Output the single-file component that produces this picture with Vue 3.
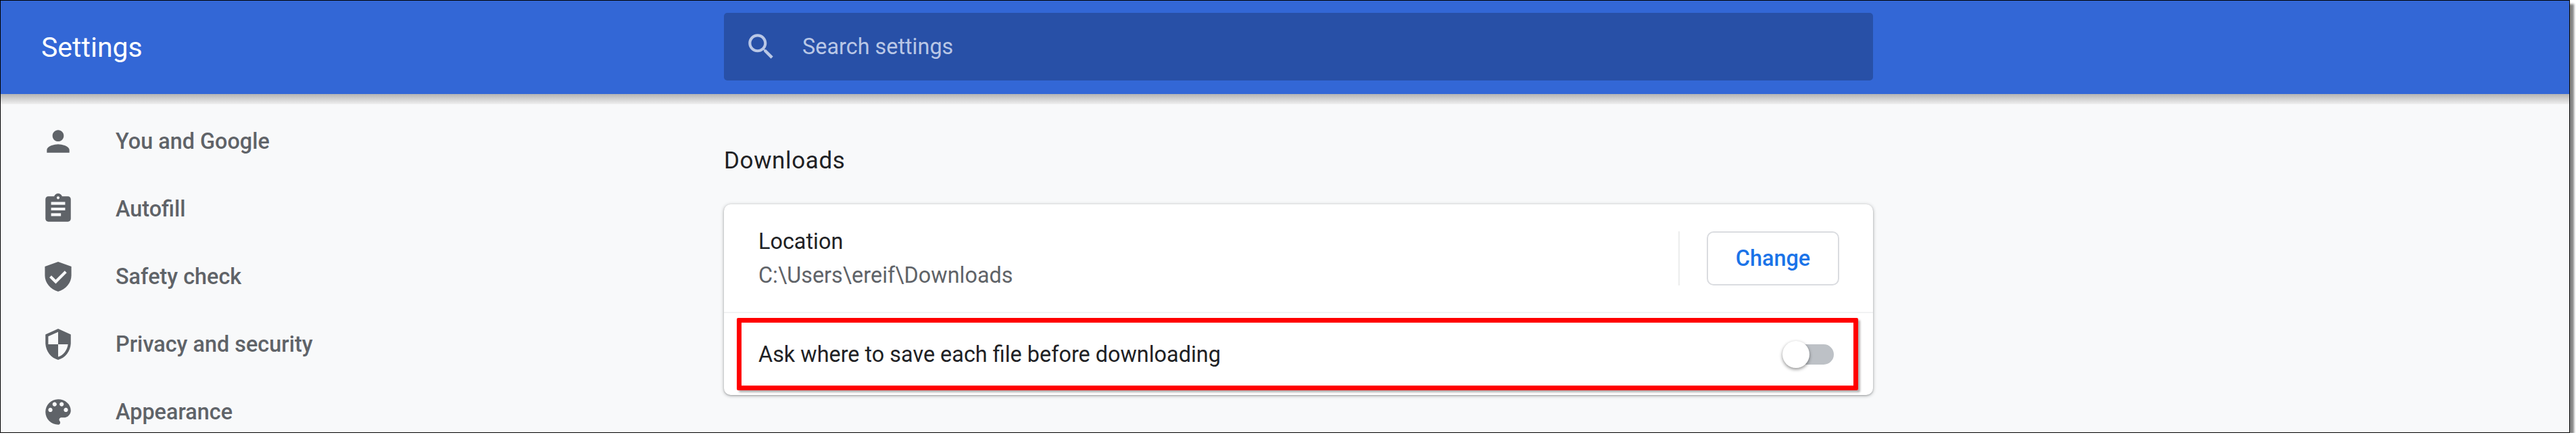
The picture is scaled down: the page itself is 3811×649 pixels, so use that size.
<script setup>
const navItems = [
  { label: 'You and Google', d: 'M12 12c2.21 0 4-1.79 4-4s-1.79-4-4-4-4 1.79-4 4 1.79 4 4 4zm0 2c-2.67 0-8 1.34-8 4v2h16v-2c0-2.66-5.33-4-8-4z' },
  { label: 'Autofill', d: 'M19 3h-4.18C14.4 1.84 13.3 1 12 1c-1.3 0-2.4.84-2.82 2H5c-1.1 0-2 .9-2 2v14c0 1.1.9 2 2 2h14c1.1 0 2-.9 2-2V5c0-1.1-.9-2-2-2zm-7 0c.55 0 1 .45 1 1s-.45 1-1 1-1-.45-1-1 .45-1 1-1zm2 14H7v-2h7v2zm3-4H7v-2h10v2zm0-4H7V7h10v2z' },
  { label: 'Safety check', d: 'M12 1.4l9.4 3.4v6.4c0 5.3-4 9.9-9.4 11.4-5.4-1.5-9.4-6.1-9.4-11.4V4.8zM10.3 17l7.8-7.8-1.4-1.4-6.4 6.4-3.1-3-1.4 1.4z' },
  { label: 'Privacy and security', d: 'M12 1L3 5v6c0 5.55 3.84 10.74 9 12 5.16-1.26 9-6.45 9-12V5l-9-4zm0 10.99h7c-.53 4.12-3.28 7.79-7 8.94V12H5V6.3l7-3.11v8.8z' },
  { label: 'Appearance', d: 'M12 3c-4.97 0-9 4.03-9 9s4.03 9 9 9c.83 0 1.5-.67 1.5-1.5 0-.39-.15-.74-.39-1.01-.23-.26-.38-.61-.38-.99 0-.83.67-1.5 1.5-1.5H16c2.76 0 5-2.24 5-5 0-4.42-4.03-8-9-8zm-5.5 9c-.83 0-1.5-.67-1.5-1.5S5.67 9 6.5 9 8 9.67 8 10.5 7.33 12 6.5 12zm3-4C8.67 8 8 7.33 8 6.5S8.67 5 9.5 5s1.5.67 1.5 1.5S10.33 8 9.5 8zm5 0c-.83 0-1.5-.67-1.5-1.5S13.67 5 14.5 5s1.5.67 1.5 1.5S15.33 8 14.5 8zm3 4c-.83 0-1.5-.67-1.5-1.5S16.67 9 17.5 9s1.5.67 1.5 1.5-.67 1.5-1.5 1.5z' }
]
</script>

<template>
  <div class="frame">
    <header class="topbar">
      <h1 class="title">Settings</h1>
      <div class="search">
        <svg class="search-icon" viewBox="0 0 24 24"><path d="M15.5 14h-.79l-.28-.27C15.41 12.59 16 11.11 16 9.5 16 5.91 13.09 3 9.5 3S3 5.91 3 9.5 5.91 16 9.5 16c1.61 0 3.09-.59 4.23-1.57l.27.28v.79l5 4.99L20.49 19l-4.99-5zm-6 0C7.01 14 5 11.99 5 9.5S7.01 5 9.5 5 14 7.01 14 9.5 11.99 14 9.5 14z" /></svg>
        <span class="search-text">Search settings</span>
      </div>
    </header>
    <div class="body">
      <nav class="nav">
        <div v-for="item in navItems" :key="item.label" class="nav-item">
          <svg class="nav-icon" viewBox="0 0 24 24"><path fill-rule="evenodd" :d="item.d" /></svg>
          <span>{{ item.label }}</span>
        </div>
      </nav>
      <main class="main">
        <h2 class="heading">Downloads</h2>
        <section class="card">
          <div class="location">
            <div class="location-text">
              <div class="primary">Location</div>
              <div class="secondary">C:\Users\ereif\Downloads</div>
            </div>
            <div class="separator"></div>
            <button class="change">Change</button>
          </div>
          <div class="highlight">
            <span class="primary">Ask where to save each file before downloading</span>
            <span class="toggle"><span class="knob"></span></span>
          </div>
        </section>
      </main>
    </div>
  </div>
</template>

<style>
html, body { background: #fff; overflow: hidden; }
</style>

<style scoped>
.frame {
  width: 3802px;
  height: 640px;
  box-sizing: border-box;
  border: 1px solid #000;
  background: #f8f9fa;
  box-shadow: 6px 6px 3px rgba(0, 0, 0, 0.48);
  display: flex;
  flex-direction: column;
  overflow: hidden;
  font-family: Roboto, "Liberation Sans", sans-serif;
}
.topbar {
  position: relative;
  flex: none;
  height: 138px;
  background: #3367d6;
  display: flex;
  align-items: center;
  padding-left: 1070px;
}
.topbar::after {
  content: "";
  position: absolute;
  left: 0;
  right: 0;
  top: 100%;
  height: 15px;
  background: linear-gradient(#b4b4b4, #efefef);
}
.title {
  position: absolute;
  left: 60px;
  top: 50%;
  transform: translateY(-50%);
  margin: 0;
  color: #fff;
  font-size: 41px;
  font-weight: 400;
  white-space: nowrap;
}
.search {
  width: 1700px;
  height: 100px;
  box-sizing: border-box;
  margin-top: -2px;
  background: #2850a7;
  border-radius: 5px;
  display: flex;
  align-items: center;
  padding-left: 30px;
}
.search-icon {
  width: 50px;
  height: 50px;
  fill: #b9c7e6;
}
.search-text {
  margin-left: 36px;
  color: #b9c7e6;
  font-size: 32.4px;
}
.body {
  flex: 1;
  min-height: 0;
  display: flex;
}
.nav {
  flex: none;
  width: 1070px;
  padding-top: 20px;
  box-sizing: border-box;
}
.nav-item {
  height: 100px;
  display: flex;
  align-items: center;
  padding-left: 60px;
  color: #5f6368;
  font-size: 32.4px;
  font-weight: 500;
}
.nav-icon {
  flex: none;
  width: 50px;
  height: 50px;
  fill: #5f6368;
  margin-right: 60px;
}
.main {
  width: 1700px;
  flex: none;
}
.heading {
  margin: 71px 0 0;
  height: 92px;
  color: #202124;
  font-size: 35px;
  line-height: 56px;
  font-weight: 400;
  letter-spacing: 0.62px;
}
.card {
  height: 282px;
  box-sizing: border-box;
  background: #fff;
  border-radius: 10px;
  box-shadow: 0 1px 5px rgba(60, 64, 67, 0.45), 0 1px 2px rgba(60, 64, 67, 0.2);
  display: flex;
  flex-direction: column;
}
.location {
  flex: none;
  height: 161px;
  box-sizing: border-box;
  border-bottom: 2px solid #f1f2f3;
  display: flex;
  align-items: center;
  padding: 0 50px 0 51px;
}
.location-text {
  flex: 1;
}
.primary {
  color: #202124;
  font-size: 32.4px;
}
.secondary {
  margin-top: 12px;
  color: #5f6368;
  font-size: 32.4px;
}
.separator {
  width: 2px;
  height: 80px;
  background: #eceded;
  margin-right: 40px;
}
.change {
  width: 196px;
  height: 80px;
  box-sizing: border-box;
  background: #fff;
  border: 2px solid #dadce0;
  border-radius: 10px;
  color: #1a73e8;
  font-family: inherit;
  font-size: 32.4px;
  font-weight: 500;
}
.highlight {
  position: relative;
  height: 107px;
  box-sizing: border-box;
  margin: 7px 22px 0 19px;
  border: 7px solid #f00;
  border-radius: 2px;
  box-shadow: 3px 3px 3px rgba(0, 0, 0, 0.3);
  display: flex;
  align-items: center;
  justify-content: space-between;
  padding-left: 25px;
  padding-right: 29px;
}
.toggle {
  position: relative;
  width: 72px;
  height: 30px;
  border-radius: 15px;
  background: #bdc1c6;
}
.knob {
  position: absolute;
  left: -4px;
  top: -5px;
  width: 40px;
  height: 40px;
  border-radius: 50%;
  background: #fff;
  box-shadow: 0 2px 5px rgba(0, 0, 0, 0.45);
}
</style>
